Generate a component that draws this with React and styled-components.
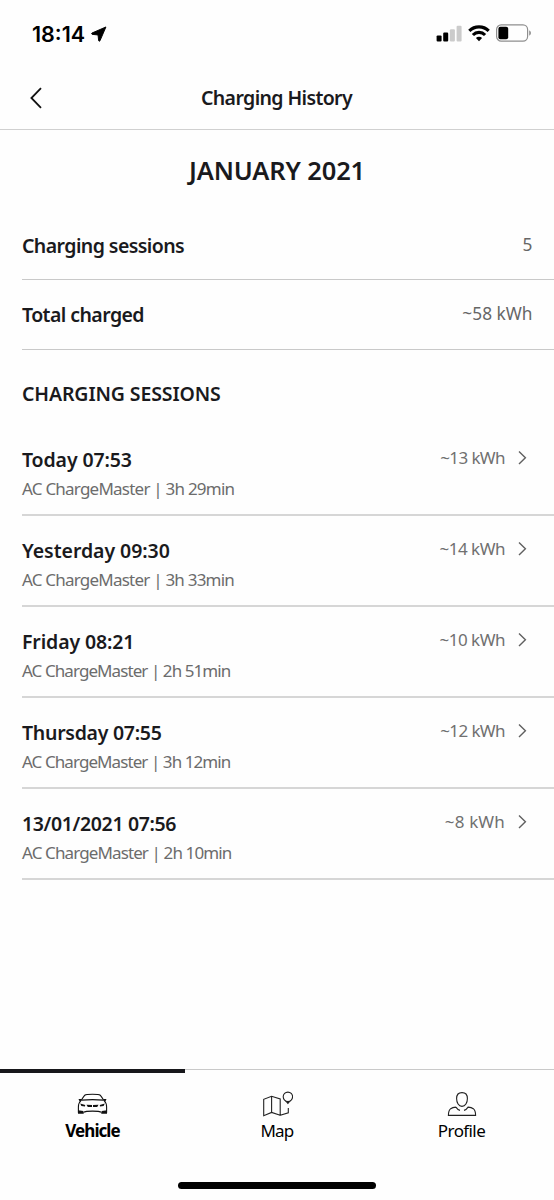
import React from "react";
import styled, { createGlobalStyle } from "styled-components";

const GlobalStyle = createGlobalStyle`
  * { box-sizing: border-box; }
  body { margin: 0; background: #fefefe; }
`;

const Screen = styled.div`
  width: 554px;
  height: 1200px;
  display: flex;
  flex-direction: column;
  overflow: hidden;
  background: #fefefe;
  color: #1a1a1d;
  font-family: "Noto Sans", "Open Sans", sans-serif;
`;

const Text = styled.span`
  white-space: nowrap;
  font-size: ${(p) => p.$size}px;
  line-height: ${(p) => p.$line || 28}px;
  font-weight: ${(p) => p.$weight || 400};
  letter-spacing: ${(p) => p.$track || 0}px;
  color: ${(p) => p.$color || "inherit"};
`;

const StatusBar = styled.div`
  height: 66px;
  padding: 0 23px 0 32px;
  display: flex;
  align-items: center;
  justify-content: space-between;
`;

const Clock = styled.div`
  display: flex;
  align-items: center;
  gap: 6px;
  padding-top: 1px;
  color: #000;
  font-family: Inter, sans-serif;
`;

const StatusIcons = styled.div`
  display: flex;
  align-items: center;
  gap: 6px;
`;

const Header = styled.header`
  height: 64px;
  display: grid;
  grid-template-columns: 72px 1fr 72px;
  align-items: center;
  justify-items: center;
  border-bottom: 1px solid #d0d0d0;
`;

const HeaderTitle = styled.div`
  display: flex;
  padding-right: 1px;
`;

const MonthTitle = styled.h1`
  margin: 0;
  height: 82px;
  padding-bottom: 2px;
  display: flex;
  align-items: center;
  justify-content: center;
`;

const Content = styled.main`
  flex: 1;
  padding-left: 22px;
`;

const SummaryRow = styled.div`
  height: ${(p) => p.$height}px;
  padding-right: 21.5px;
  display: flex;
  align-items: center;
  justify-content: space-between;
  border-bottom: 1px solid #c9c9c9;
`;

const SummaryValue = styled.div`
  display: flex;
  padding-bottom: 2px;
`;

const SectionTitle = styled.h2`
  margin: 0;
  height: 75px;
  padding-top: 28px;
  line-height: 28px;
`;

const SessionRow = styled.div`
  height: 91px;
  padding: 21px 27px 0 0;
  display: flex;
  align-items: flex-start;
  justify-content: space-between;
  border-bottom: 2px solid #d6d6d6;
`;

const SessionInfo = styled.div`
  display: flex;
  flex-direction: column;
  gap: 1px;
`;

const SessionEnergy = styled.div`
  display: flex;
  align-items: center;
  gap: 13px;
  margin-top: -2px;
`;

const TabBar = styled.nav`
  height: 131px;
  display: flex;
  flex-direction: column;
  justify-content: space-between;
  align-items: center;
`;

const Tabs = styled.div`
  width: 100%;
  height: 78px;
  display: grid;
  grid-template-columns: 185px 184px 185px;
`;

const Tab = styled.div`
  display: flex;
  flex-direction: column;
  align-items: center;
  padding-top: ${(p) => (p.$active ? 17 : 20)}px;
  border-top: ${(p) => (p.$active ? "4px solid #17171b" : "1px solid #c9c9c9")};
  color: #000;
`;

const HomeIndicator = styled.div`
  width: 198px;
  height: 7px;
  margin-bottom: 11px;
  border-radius: 4px;
  background: #000;
`;

const LocationArrow = () => (
  <svg width="16" height="16" viewBox="0 0 15 15">
    <path d="M14 0.9 L0.9 6.6 Q0 7.3 1 7.8 L6.6 8.4 L7.2 13.8 Q7.7 14.7 8.4 13.9 Z" fill="#000" stroke="#000" strokeWidth="0.9" strokeLinejoin="round" />
  </svg>
);

const SignalIcon = () => (
  <svg width="26" height="17" viewBox="0 0 26 17">
    <rect x="0.6" y="10.5" width="5" height="6" rx="1.1" fill="#000" />
    <rect x="7.2" y="7.6" width="5" height="8.9" rx="1.1" fill="#000" />
    <rect x="13.9" y="4.2" width="5" height="12.3" rx="1.1" fill="#cbcbcb" />
    <rect x="20.6" y="0.7" width="5" height="15.8" rx="1.1" fill="#cbcbcb" />
  </svg>
);

const WifiIcon = () => (
  <svg width="22" height="17" viewBox="0 0 22 17">
    <g fill="none" stroke="#000" strokeWidth="3.1">
      <path d="M1.3 5.9 A13.7 13.7 0 0 1 20.7 5.9" />
      <path d="M4.9 10 A8.5 8.5 0 0 1 17.1 10" />
    </g>
    <path d="M7.9 13 A4.4 4.4 0 0 1 14.1 13 L11 16.2 Z" fill="#000" />
  </svg>
);

const BatteryIcon = () => (
  <svg width="35" height="18" viewBox="0 0 35 18">
    <rect x="0.6" y="0.9" width="31" height="16.2" rx="4.6" fill="none" stroke="#8e8e8e" strokeWidth="1.2" />
    <rect x="2.4" y="2.8" width="9.8" height="12.4" rx="2" fill="#000" />
    <path d="M33.2 6.2 Q35 7.3 35 9 Q35 10.7 33.2 11.8 Z" fill="#8e8e8e" />
  </svg>
);

const BackIcon = () => (
  <svg width="12" height="22" viewBox="0 0 12 22">
    <path d="M11 1.2 L1.4 11 L11 20.8" fill="none" stroke="#111" strokeWidth="1.8" />
  </svg>
);

const ChevronIcon = () => (
  <svg width="9" height="14" viewBox="0 0 9 14">
    <path d="M1 0.5 L7.4 6.8 L1 13.1" fill="none" stroke="#606060" strokeWidth="1.4" />
  </svg>
);

const CarIcon = () => (
  <svg width="32" height="27" viewBox="0.5 0 32 27">
    <g fill="none" stroke="#111" strokeWidth="1.1">
      <path d="M4.6 10.5 Q7 6.8 8.3 5.2 Q9.4 4.3 16 4.3 Q22.6 4.3 23.7 5.2 Q25 6.8 27.4 10.5" />
      <path d="M5 10.1 Q16 9.2 27 10.1" />
      <path d="M4.6 10.3 Q1.8 13 1.9 17 L1.9 22.8 M27.4 10.3 Q30.2 13 30.1 17 L30.1 22.8" />
      <path d="M6.8 22.4 Q9 21.1 16 21.1 Q23 21.1 25.2 22.4" />
    </g>
    <g fill="#111">
      <path d="M1.5 20.2 L6.7 21.1 L7.3 23.7 L1.5 23.7 Z M30.5 20.2 L25.3 21.1 L24.7 23.7 L30.5 23.7 Z" />
      <path d="M2 9 L5 9 L4.2 11.2 L3 11.2 Z M30 9 L27 9 L27.8 11.2 L29 11.2 Z" />
      <path d="M3.7 13.6 L8.7 15 L8.5 16.5 L4.9 16 Z M28.3 13.6 L23.3 15 L23.5 16.5 L27.1 16 Z" />
      <path d="M10 14.8 L15.5 15 L15.5 17.1 L11.3 17 Z M22 14.8 L16.5 15 L16.5 17.1 L20.7 17 Z" />
    </g>
  </svg>
);

const MapIcon = () => (
  <svg width="32" height="27" viewBox="0 0 32 27">
    <g fill="none" stroke="#222" strokeWidth="1.1">
      <path d="M19.2 25.2 L10.6 22.4 L2.7 25.7 V9.3 L10.6 6.3 L19.2 9 V25.2 L27.3 22.8 V18" />
      <path d="M10.6 6.3 V22.4" />
      <circle cx="26.9" cy="6.8" r="4.7" />
    </g>
    <path d="M23.7 10.4 Q27 12.2 30.1 10.4 L26.9 14.3 Z" fill="#222" />
  </svg>
);

const ProfileIcon = () => (
  <svg width="32" height="27" viewBox="0 0 32 27">
    <g fill="none" stroke="#222" strokeWidth="1.1">
      <path d="M16 2.6 C19.4 2.6 21.4 4.8 21.4 8.5 C21.4 12.7 19.3 16.4 16 16.4 C12.7 16.4 10.6 12.7 10.6 8.5 C10.6 4.8 12.6 2.6 16 2.6 Z" />
      <path d="M9.9 17.1 Q6.5 17.4 4.7 18.7 Q2.4 20.6 2.4 25.4 H29.6 Q29.6 20.6 27.3 18.7 Q25.5 17.4 22.1 17.1 Q20.3 19.8 18 20.4 M9.9 17.1 Q11.7 19.8 14 20.4" />
    </g>
  </svg>
);

const summary = [
  { label: "Charging sessions", value: "5", height: 67, track: -0.57 },
  { label: "Total charged", value: "~58 kWh", height: 70, track: -0.57 },
];

const sessions = [
  { when: "Today 07:53", detail: "AC ChargeMaster | 3h 29min", energy: "~13 kWh", track: [-0.12, -0.77, -0.6] },
  { when: "Yesterday 09:30", detail: "AC ChargeMaster | 3h 33min", energy: "~14 kWh", track: [-0.05, -0.78, -0.5] },
  { when: "Friday 08:21", detail: "AC ChargeMaster | 2h 51min", energy: "~10 kWh", track: [-0.12, -0.92, -0.5] },
  { when: "Thursday 07:55", detail: "AC ChargeMaster | 3h 12min", energy: "~12 kWh", track: [-0.28, -0.92, -0.6] },
  { when: "13/01/2021 07:56", detail: "AC ChargeMaster | 2h 10min", energy: "~8 kWh", track: [-0.36, -0.88, 0.15] },
];

const tabs = [
  { label: "Vehicle", Icon: CarIcon, active: true, track: -0.95 },
  { label: "Map", Icon: MapIcon, track: -0.8 },
  { label: "Profile", Icon: ProfileIcon, track: -0.6 },
];

export default function App() {
  return (
    <Screen>
      <GlobalStyle />
      <StatusBar>
        <Clock>
          <Text $size={21.5} $weight={600}>18:14</Text>
          <LocationArrow />
        </Clock>
        <StatusIcons>
          <SignalIcon />
          <WifiIcon />
          <BatteryIcon />
        </StatusIcons>
      </StatusBar>
      <Header>
        <BackIcon />
        <HeaderTitle>
          <Text $size={19.5} $weight={600} $track={-0.62}>Charging History</Text>
        </HeaderTitle>
      </Header>
      <MonthTitle>
        <Text $size={25.5} $weight={600} $track={-0.15}>JANUARY 2021</Text>
      </MonthTitle>
      <Content>
        {summary.map((s) => (
          <SummaryRow key={s.label} $height={s.height + (s.value === "5" ? 1 : 0)}>
            <Text $size={19.5} $weight={600} $track={s.track}>{s.label}</Text>
            <SummaryValue>
              <Text $size={17.3} $color="#666">{s.value}</Text>
            </SummaryValue>
          </SummaryRow>
        ))}
        <SectionTitle>
          <Text $size={19.5} $weight={600} $track={-0.12}>CHARGING SESSIONS</Text>
        </SectionTitle>
        {sessions.map((s) => (
          <SessionRow key={s.when}>
            <SessionInfo>
              <Text $size={19.5} $weight={600} $track={s.track[0]}>{s.when}</Text>
              <Text $size={17} $color="#6c6c6c" $track={s.track[1]}>{s.detail}</Text>
            </SessionInfo>
            <SessionEnergy>
              <Text $size={17} $color="#707070" $track={s.track[2]}>{s.energy}</Text>
              <ChevronIcon />
            </SessionEnergy>
          </SessionRow>
        ))}
      </Content>
      <TabBar>
        <Tabs>
          {tabs.map(({ label, Icon, active, track }) => (
            <Tab key={label} $active={active}>
              <Icon />
              <Text $size={17} $weight={active ? 700 : 400} $track={track}>{label}</Text>
            </Tab>
          ))}
        </Tabs>
        <HomeIndicator />
      </TabBar>
    </Screen>
  );
}
